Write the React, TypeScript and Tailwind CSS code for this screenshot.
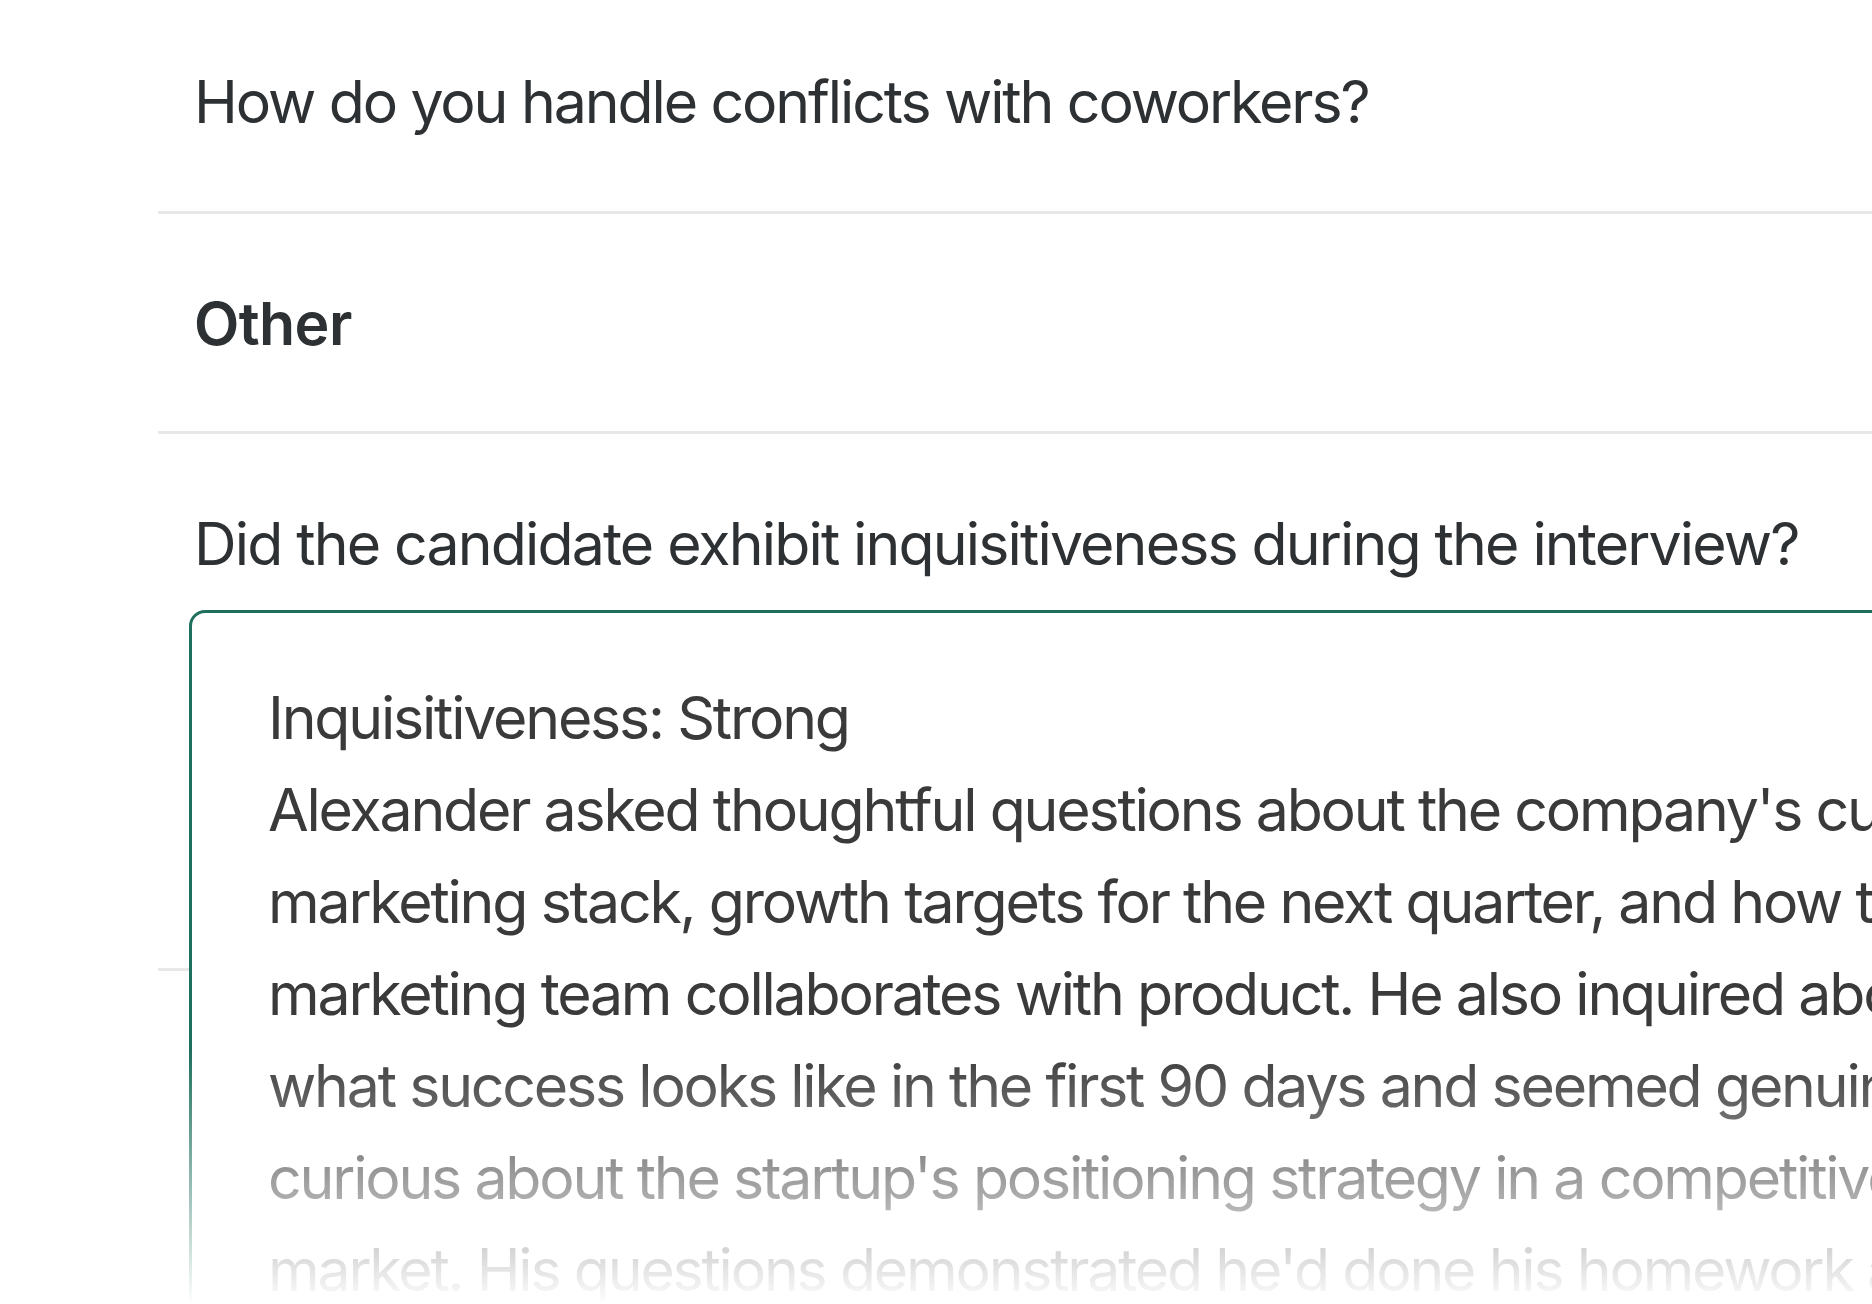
import React from "react";

const lines = [
  "Inquisitiveness: Strong",
  "Alexander asked thoughtful questions about the company's current",
  "marketing stack, growth targets for the next quarter, and how the",
  "marketing team collaborates with product. He also inquired about",
  "what success looks like in the first 90 days and seemed genuinely",
  "curious about the startup's positioning strategy in a competitive",
  "market. His questions demonstrated he'd done his homework and",
];

export default function App() {
  return (
    <div
      className="relative w-[1872px] h-[1304px] overflow-hidden bg-white text-[#2e3133]"
      style={{ fontFamily: "Inter, 'Noto Sans', sans-serif" }}
    >
      <div className="ml-[158px]">
        <div className="pt-[56px] pb-[63px] pl-[36px] border-b-[3px] border-[#e8e8e8]">
          <div className="text-[59px] leading-[92px] whitespace-nowrap tracking-[-2.1px]">
            How do you handle conflicts with coworkers?
          </div>
        </div>
        <div className="pt-[64px] pb-[61px] pl-[36px] border-b-[3px] border-[#e8e8e8]">
          <div className="text-[59px] leading-[92px] font-semibold whitespace-nowrap tracking-[-0.6px]">
            Other
          </div>
        </div>
        <div className="relative h-[537px] pt-[64px] pl-[36px] border-b-[3px] border-[#e8e8e8]">
          <div className="text-[59px] leading-[92px] whitespace-nowrap tracking-[-1.85px]">
            Did the candidate exhibit inquisitiveness during the interview?
          </div>
          <div className="absolute left-[31px] top-[176px] w-[2000px] h-[900px] bg-white border-[3px] border-[#1e6f5c] rounded-[16px] pt-[59px] pl-[76px] text-[#3a3a3a]">
            {lines.map((l, i) => (
              <div key={i} className="text-[59px] leading-[92px] whitespace-nowrap tracking-[-2.2px]">
                {l}
              </div>
            ))}
          </div>
        </div>
      </div>
      <div className="absolute left-0 right-0 bottom-0 h-[254px] bg-gradient-to-b from-white/0 to-white" />
    </div>
  );
}
